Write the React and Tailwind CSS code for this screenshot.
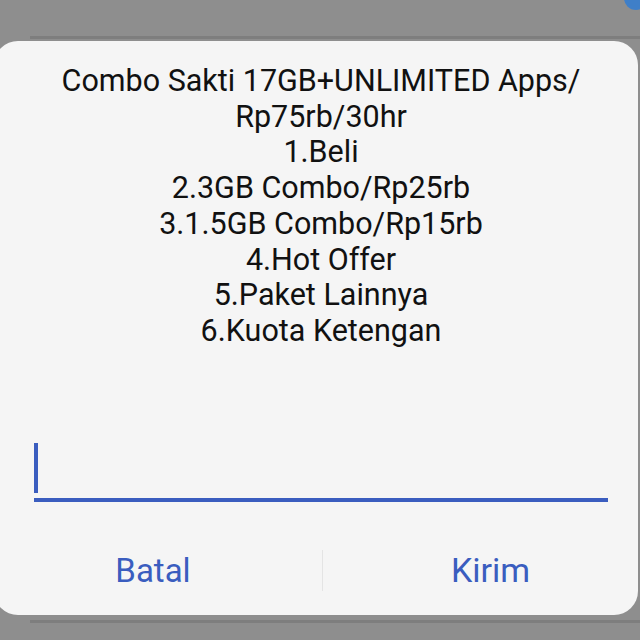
export default function App() {
  const lines = [
    'Combo Sakti 17GB+UNLIMITED Apps/',
    'Rp75rb/30hr',
    '1.Beli',
    '2.3GB Combo/Rp25rb',
    '3.1.5GB Combo/Rp15rb',
    '4.Hot Offer',
    '5.Paket Lainnya',
    '6.Kuota Ketengan',
  ];

  return (
    <div className="relative w-[640px] h-[640px] overflow-hidden bg-[#8e8e8e] font-['Roboto',sans-serif]">
      {/* status icon peeking at top right */}
      <div className="absolute -top-[14px] -right-[8px] w-[24px] h-[24px] rounded-full bg-[#3f7fc8]" />

      <div className="h-[36px]" />
      <div className="ml-[30px] h-[3px] bg-[#7e7e7e]" />
      <div className="h-[2px]" />

      <div className="-ml-[6px] w-[644px] h-[574px] rounded-[24px] bg-[#f5f5f5] flex flex-col">
        <div className="pt-[22px] pl-[10px] text-center text-[30.5px] leading-[35.7px] text-[#111111]">
          {lines.map((l) => (
            <div key={l}>{l}</div>
          ))}
        </div>

        <div className="mt-[94px] pl-[40px] pr-[30px]">
          <div className="h-[59px] border-b-4 border-[#3a5dbf]">
            <div className="w-[4px] h-[50px] bg-[#3a5dbf]" />
          </div>
        </div>

        <div className="flex-1 flex items-center pt-[24px]">
          <button className="w-[328px] pr-[10px] text-[33px] text-[#3a5dbf]">Batal</button>
          <div className="w-px h-[41px] bg-[#e4e4e4]" />
          <button className="flex-1 pl-[20px] text-[34px] text-[#3a5dbf]">Kirim</button>
        </div>
      </div>

      <div className="mt-[5px] ml-[30px] h-[3px] bg-[#7e7e7e]" />
    </div>
  );
}
